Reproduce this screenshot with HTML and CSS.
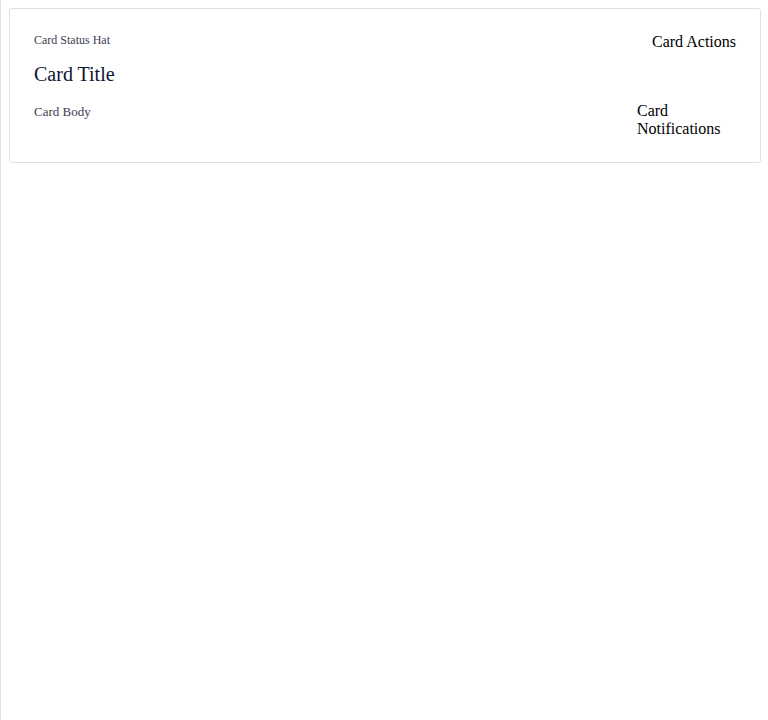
FILE: index.html
```html
<!DOCTYPE html>
<html>
<head>
<meta charset="utf-8">
<link rel="stylesheet" href="styles.css">
</head>
<body>
<div class="card">
  <div class="card-header">
    <div class="card-heading">
      <div class="card-hat">Card Status Hat</div>
      <div class="card-title">Card Title</div>
    </div>
    <div class="card-actions">Card Actions</div>
  </div>
  <div class="card-main">
    <div class="card-body">Card Body</div>
    <div class="card-notifications">Card Notifications</div>
  </div>
</div>
</body>
</html>
```

FILE: styles.css
```css
html {
  border-left: 1px solid #e2e2e2;
  min-height: 100%;
  box-sizing: border-box;
}
body {
  margin: 8px 7px 8px 8px;
  font-family: "Liberation Serif", "Times New Roman", serif;
  color: #000;
}
.card {
  border: 1px solid #e0e0e0;
  border-radius: 3px;
  padding: 24px;
  background: #fff;
}
.card-header {
  display: flex;
  justify-content: space-between;
  align-items: flex-start;
}
.card-hat {
  font-size: 12px;
  color: #3a4152;
}
.card-title {
  font-size: 20px;
  color: #0c1530;
  margin-top: 15px;
}
.card-actions {
  font-size: 16px;
}
.card-main {
  display: flex;
  justify-content: space-between;
  align-items: baseline;
  margin-top: 16px;
}
.card-body {
  font-size: 13px;
  color: #3a4152;
}
.card-notifications {
  font-size: 16px;
  width: 99px;
}
```
